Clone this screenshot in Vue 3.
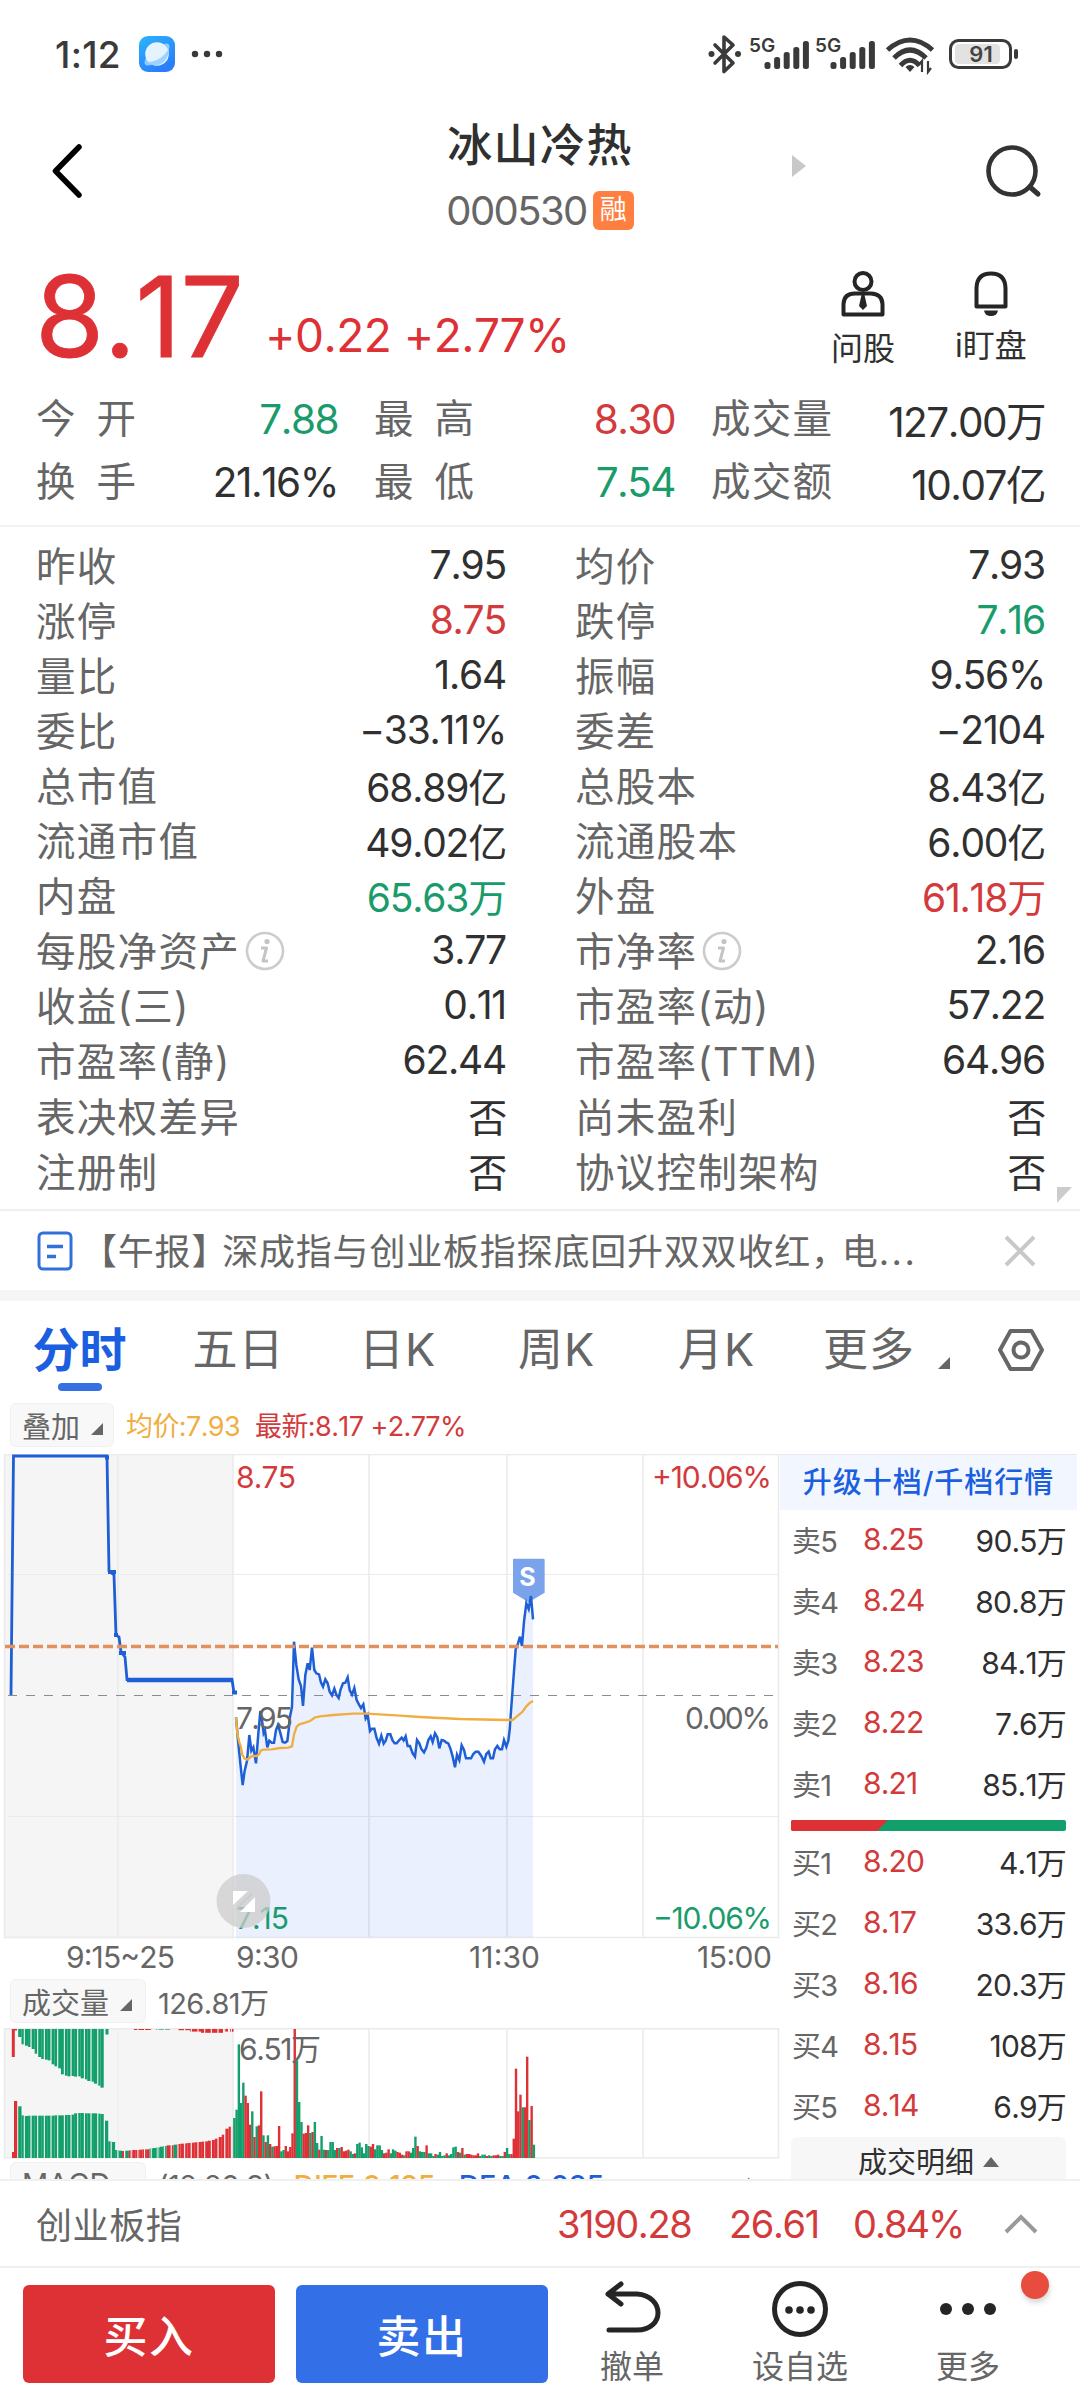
<template>
  <div class="page">
    <header class="status">
      <span class="clock">1:12</span>
      <svg class="globe" viewBox="0 0 36 36">
        <defs>
          <linearGradient id="globeBg" x1="0" y1="0" x2="0.6" y2="1">
            <stop offset="0" stop-color="#2cb5fb" />
            <stop offset="1" stop-color="#2a7dfb" />
          </linearGradient>
        </defs>
        <rect width="36" height="36" rx="9" fill="url(#globeBg)" />
        <ellipse cx="18" cy="18.500" rx="15.500" ry="6" fill="#8fcbff" transform="rotate(-40 18 18.500)" />
        <circle cx="18" cy="18" r="11.800" fill="#e3f4ff" />
        <path d="M8 26C18 26 26 20 30 12C31 24 20 33 11 28Z" fill="#9fd2ff" />
      </svg>
      <svg class="more-dots" viewBox="0 0 32 8">
        <circle v-for="x in [4, 16, 28]" :key="x" :cx="x" cy="4" r="3.2" fill="#3a3a3a" />
      </svg>
      <svg class="status-icons" viewBox="0 0 320 44">
        <g fill="none" stroke="#3a3a3a" stroke-width="3.600" stroke-linejoin="round" stroke-linecap="round">
          <path d="M10 13L28 31L19 39.500V5L28 13L10 31" />
        </g>
        <circle cx="6.500" cy="22" r="3" fill="#3a3a3a" />
        <circle cx="33" cy="22" r="3" fill="#3a3a3a" />
        <g v-for="x in [0, 66]" :key="x">
          <text :x="44 + x" y="19.500" class="net">5G</text>
          <rect
            v-for="(h, i) in [7, 12, 17, 22, 28]"
            :key="h"
            :x="59.500 + x + i * 9.6"
            :y="37 - h"
            width="6"
            :height="h"
            rx="2.500"
            fill="#3a3a3a"
          />
        </g>
        <g fill="none" stroke="#3a3a3a" stroke-width="5">
          <path d="M182.500 18Q205 -2 227.500 18" />
          <path d="M189 26Q205 10 221 26" />
          <path d="M195.500 33.500Q205 23 214.500 33.500" />
        </g>
        <path d="M200.500 35Q205 31 209.500 35L205 40Z" fill="#3a3a3a" />
        <path d="M217 40V29L213.500 33M223 29V40L226 36" fill="none" stroke="#3a3a3a" stroke-width="2.200" />
        <rect x="245.500" y="8.500" width="60" height="27" rx="8" fill="#fff" stroke="#3a3a3a" stroke-width="3" />
        <rect x="250" y="12" width="45" height="20" rx="4" fill="#e2e2e2" />
        <rect x="309" y="17" width="4" height="10" rx="2" fill="#3a3a3a" />
        <text x="276" y="30" class="battery">91</text>
      </svg>
    </header>

    <nav class="title-bar">
      <svg class="back" viewBox="0 0 34 56">
        <path d="M29 4L5.500 28L29 52" fill="none" stroke="#000" stroke-width="5.500" stroke-linecap="round" stroke-linejoin="round" />
      </svg>
      <div class="title">
        <h1>冰山冷热</h1>
        <div class="code"><span>000530</span><i>融</i></div>
      </div>
      <svg class="next" viewBox="0 0 14 22"><path d="M0 0L14 11L0 22Z" fill="#c8c8c8" /></svg>
      <svg class="search" viewBox="0 0 60 56">
        <circle cx="28" cy="27" r="23.500" fill="none" stroke="#333" stroke-width="4.600" />
        <path d="M46 43L54 50" stroke="#333" stroke-width="5" stroke-linecap="round" />
      </svg>
    </nav>

    <section class="price-row">
      <span class="price">8.17</span>
      <span class="change">+0.22 +2.77%</span>
      <div class="action ask">
        <svg viewBox="0 0 44 46" fill="none" stroke="#252525" stroke-width="4">
          <circle cx="22" cy="10.500" r="8.500" />
          <path d="M2.500 43.500V33Q3 22.500 14 22.500H30Q41 23 41.500 33V43.500Z" stroke-linejoin="round" />
          <path d="M20.500 24H23.500L26 35L22 39L18 35Z" fill="#252525" stroke="none" />
        </svg>
        <span>问股</span>
      </div>
      <div class="action bell">
        <svg viewBox="0 0 44 46" fill="none" stroke="#252525" stroke-width="4">
          <path d="M7.500 35.500V17Q8 2.500 22 2.500Q36 2.500 36.500 17V35.500Z" stroke-linejoin="round" />
          <path d="M15 39.500H29Q28 45 22 45Q16 45 15 39.500Z" fill="#252525" stroke="none" />
        </svg>
        <span>i盯盘</span>
      </div>
    </section>

    <section class="summary">
      <div v-for="s in summary" :key="s.label" class="summary-cell">
        <span :class="['label', { spread: s.label.length === 2 }]">{{ s.label }}</span>
        <span :class="['num', s.tone]">{{ s.value }}</span>
      </div>
    </section>

    <section class="detail">
      <div v-for="d in details" :key="d[0]" class="detail-cell">
        <span class="label">{{ d[0] }}</span>
        <svg v-if="d[3]" class="info" viewBox="0 0 40 40">
          <circle cx="20" cy="20" r="18" fill="none" stroke="#ccc" stroke-width="2.600" />
          <circle cx="22" cy="10.500" r="2.600" fill="#c4c4c4" />
          <path d="M16 17H21.500L18 30H23M18 17" fill="none" stroke="#c4c4c4" stroke-width="3" stroke-linejoin="round" />
        </svg>
        <span :class="['num', d[2]]">{{ d[1] }}</span>
      </div>
      <svg class="corner" viewBox="0 0 16 16"><path d="M0 0H15L0 16Z" fill="#ccc" /></svg>
    </section>

    <section class="news">
      <svg class="doc" viewBox="0 0 36 40" fill="none" stroke="#3470dc" stroke-width="3">
        <rect x="2" y="2" width="32" height="36" rx="4" />
        <path d="M10 15.500H26M10 25.500H19" stroke-width="3.500" />
      </svg>
      <span class="headline">【午报<span class="bracket">】</span>深成指与创业板指探底回升双双收红<span class="comma">，</span>电<span class="dots">...</span></span>
      <svg class="close" viewBox="0 0 32 32">
        <path d="M2 2L30 30M30 2L2 30" stroke="#c8c8c8" stroke-width="4" />
      </svg>
    </section>

    <nav class="tabs">
      <span v-for="(t, i) in tabs" :key="t" :class="{ active: i === 0 }">{{ t }}</span>
      <svg class="tab-arrow" viewBox="0 0 12 12"><path d="M12 0V12H0Z" fill="#666" /></svg>
      <svg class="settings" viewBox="0 0 48 44" fill="none" stroke="#666" stroke-width="4">
        <path d="M13.500 3H34.500L45 22L34.500 41H13.500L3 22Z" stroke-linejoin="round" />
        <circle cx="24" cy="22" r="7.500" />
      </svg>
    </nav>

    <div class="legend">
      <span class="pill">叠加<svg viewBox="0 0 12 12"><path d="M12 0V12H0Z" fill="#666" /></svg></span>
      <span class="avg">均价:7.93</span>
      <span class="latest">最新:8.17 +2.77%</span>
    </div>

    <main class="market">
      <div class="charts">
        <svg class="chart" viewBox="0 0 780 524">
          <rect x="5" y="1" width="228" height="482" fill="#f5f5f5" />
          <g fill="none" stroke="#ebebeb" stroke-width="1.600">
            <rect x="4.500" y=".500" width="774" height="483" />
            <path v-for="x in [118, 233, 369, 507, 643]" :key="x" :d="`M${x} 0V483`" />
            <path d="M8 120.500H778M8 362.500H778" stroke-width="1" />
          </g>
          <g transform="translate(220 86) scale(.33333)">
            <polygon :points="`48,1192 ${priceLine} 939,1192`" fill="#2f6de8" fill-opacity=".1" />
          </g>
          <path d="M8 241.500H778" stroke="#8c8c8c" stroke-width="1.200" stroke-dasharray="9 9" />
          <path d="M11 241L13.500 2H107L109 117L114 121L116 181L119 183L121 198L125 203L127 225.500H232L234 239" class="line" />
          <path d="M127 226H233" stroke="#1f5fd6" stroke-width="4.600" />
          <path d="M105 3.500H109M108 118H116M114 181H118M119 199H126M232 238.500H237" stroke="#1f5fd6" stroke-width="4" />
          <g transform="translate(220 86) scale(.33333)">
            <path d="M879 58Q879 56 883 56H970Q974 56 974 60V158L926 187L879 158Z" fill="#7ba3ec" />
            <text x="922" y="139" class="marker">S</text>
            <polyline :points="priceLine" fill="none" stroke="#1f5fd6" stroke-width="7.500" />
            <polyline :points="avgLine" fill="none" stroke="#efae3f" stroke-width="7" stroke-linejoin="round" />
          </g>
          <text x="236" y="274.500" class="axis" textLength="57">7.95</text>
          <path d="M5 192.500H778" stroke="#e2915c" stroke-width="3.400" stroke-dasharray="10 4" />
          <text x="236" y="33.500" class="axis up" textLength="60">8.75</text>
          <text x="236" y="475" class="axis down" textLength="53">7.15</text>
          <circle cx="243.500" cy="447" r="27" fill="#ccc" fill-opacity=".75" />
          <path d="M233 437H248L233 451ZM255 443V458H240Z" fill="#fff" />
          <path d="M236 455L252 440" stroke="#ccc" stroke-width="2" />
          <text x="652" y="33.500" class="axis up" textLength="120">+10.06%</text>
          <text x="685" y="274.500" class="axis" textLength="86">0.00%</text>
          <text x="653" y="475" class="axis down" textLength="119">−10.06%</text>
          <text x="66" y="514" class="axis" textLength="109">9:15~25</text>
          <text x="236" y="514" class="axis" textLength="63">9:30</text>
          <text x="469" y="514" class="axis" textLength="71">11:30</text>
          <text x="697" y="514" class="axis" textLength="75">15:00</text>
        </svg>
        <div class="legend volume-legend">
          <span class="pill wide">成交量<svg viewBox="0 0 12 12"><path d="M12 0V12H0Z" fill="#666" /></svg></span>
          <span>126.81万</span>
        </div>
        <svg class="volume" viewBox="0 0 780 131">
          <rect x="5" y="1" width="228" height="129" fill="#f5f5f5" />
          <g fill="none" stroke="#ebebeb" stroke-width="1.600">
            <rect x="4.500" y=".800" width="774" height="129" />
            <path v-for="x in [118, 233, 369, 507, 643]" :key="x" :d="`M${x} 0V130`" />
          </g>
          <rect v-for="(b, i) in auctionBars" :key="'a' + i" :x="b.x" :y="b.y" :width="b.w" :height="b.h" :fill="b.fill" />
          <path v-for="x in auctionGaps" :key="x" :d="`M${x} 1V130`" stroke="#f5f5f5" stroke-width="1.100" />
          <rect v-for="(b, i) in volumeBars" :key="i" :x="b.x" :y="130 - b.h" width="2.400" :height="b.h" :fill="b.fill" />
          <text x="239" y="32" class="axis" textLength="82">6.51万</text>
        </svg>
        <div class="legend macd">
          <span class="pill wide">MACD</span>
          <span>(12,26,9)</span>
          <span class="diff">DIFF:0.125</span>
          <span class="dea">DEA:0.085</span>
          <span class="macd-tail">▲</span>
        </div>
      </div>

      <aside class="book">
        <div class="upgrade">升级十档/千档行情</div>
        <div v-for="q in asks" :key="q[0]" class="quote">
          <span>{{ q[0] }}</span><b>{{ q[1] }}</b><em>{{ q[2] }}</em>
        </div>
        <svg class="ratio" viewBox="0 0 275 11">
          <rect width="275" height="11" rx="2" fill="#139f6b" />
          <path d="M2 0H97L86 11H2Q0 11 0 9V2Q0 0 2 0Z" fill="#de3136" />
        </svg>
        <div v-for="q in bids" :key="q[0]" class="quote">
          <span>{{ q[0] }}</span><b>{{ q[1] }}</b><em>{{ q[2] }}</em>
        </div>
        <div class="trades">成交明细<svg viewBox="0 0 16 10"><path d="M8 0L16 10H0Z" fill="#666" /></svg></div>
      </aside>
    </main>

    <section class="index-bar">
      <span class="index-name">创业板指</span>
      <span class="i1">3190.28</span>
      <span class="i2">26.61</span>
      <span class="i3">0.84%</span>
      <svg viewBox="0 0 34 20"><path d="M2 18L17 3L32 18" fill="none" stroke="#999" stroke-width="4" /></svg>
    </section>

    <footer class="actions">
      <button class="buy">买入</button>
      <button class="sell">卖出</button>
      <div class="tool cancel">
        <svg viewBox="0 0 60 60" fill="none" stroke="#252525" stroke-width="5" stroke-linecap="round" stroke-linejoin="round">
          <path d="M6 15H35C63 17 63 51 35 51H7M19 5L6 15L19 25" />
        </svg>
        <span>撤单</span>
      </div>
      <div class="tool choose">
        <svg viewBox="0 0 60 60">
          <circle cx="30" cy="30" r="25.500" fill="none" stroke="#252525" stroke-width="5" />
          <circle v-for="x in [19, 30, 41]" :key="x" :cx="x" cy="31" r="3.800" fill="#252525" />
        </svg>
        <span>设自选</span>
      </div>
      <div class="tool extra">
        <svg viewBox="0 0 60 60">
          <circle v-for="x in [8, 30, 52]" :key="x" :cx="x" cy="30" r="6" fill="#252525" />
        </svg>
        <span>更多</span>
        <i class="badge"></i>
      </div>
    </footer>
  </div>
</template>

<script setup>
const RED = '#de3136';
const GREEN = '#139f6b';

const summary = [
  { label: '今开', value: '7.88', tone: 'down' },
  { label: '最高', value: '8.30', tone: 'up' },
  { label: '成交量', value: '127.00万' },
  { label: '换手', value: '21.16%' },
  { label: '最低', value: '7.54', tone: 'down' },
  { label: '成交额', value: '10.07亿' }
];

// label, value, tone, info icon
const details = [
  ['昨收', '7.95'], ['均价', '7.93'],
  ['涨停', '8.75', 'up'], ['跌停', '7.16', 'down'],
  ['量比', '1.64'], ['振幅', '9.56%'],
  ['委比', '−33.11%'], ['委差', '−2104'],
  ['总市值', '68.89亿'], ['总股本', '8.43亿'],
  ['流通市值', '49.02亿'], ['流通股本', '6.00亿'],
  ['内盘', '65.63万', 'down'], ['外盘', '61.18万', 'up'],
  ['每股净资产', '3.77', '', true], ['市净率', '2.16', '', true],
  ['收益(三)', '0.11'], ['市盈率(动)', '57.22'],
  ['市盈率(静)', '62.44'], ['市盈率(TTM)', '64.96'],
  ['表决权差异', '否'], ['尚未盈利', '否'],
  ['注册制', '否'], ['协议控制架构', '否']
];

const tabs = ['分时', '五日', '日K', '周K', '月K', '更多'];

const asks = [
  ['卖5', '8.25', '90.5万'],
  ['卖4', '8.24', '80.8万'],
  ['卖3', '8.23', '84.1万'],
  ['卖2', '8.22', '7.6万'],
  ['卖1', '8.21', '85.1万']
];
const bids = [
  ['买1', '8.20', '4.1万'],
  ['买2', '8.17', '33.6万'],
  ['买3', '8.16', '20.3万'],
  ['买4', '8.15', '108万'],
  ['买5', '8.14', '6.9万']
];

const priceLine =
  '48,532 54,600 61,670 68,735 74,692 81,663 88,585 94,632 100,622 108,670 115,580 121,513 128,555 131,580 135,572 142,622 148,602 155,608 162,608 168,570 174,555 180,575 188,606 195,608 202,603 206,570 210,530 216,500 222,305 229,375 236,418 243,438 249,498 256,405 263,370 269,390 276,323 283,390 289,400 297,403 303,428 309,440 316,418 323,430 329,455 336,466 343,446 349,464 356,474 362,448 369,430 376,428 383,412 389,450 396,464 403,444 410,480 417,494 423,504 430,493 437,535 443,525 450,573 456,566 463,566 470,594 477,611 484,587 491,611 497,602 503,583 511,583 518,602 524,610 530,610 538,600 545,593 551,601 557,589 563,618 570,618 578,640 585,650 591,600 598,610 604,627 612,637 619,623 625,600 632,589 638,606 645,580 652,592 658,625 665,600 672,602 678,607 685,610 692,628 698,650 705,682 711,644 718,660 725,616 732,630 738,655 753,655 760,642 767,635 775,635 784,648 792,665 799,642 806,635 812,655 819,655 825,628 832,618 839,628 846,628 852,600 859,620 865,602 869,570 874,500 880,420 887,328 894,310 900,290 906,318 912,245 919,190 926,207 933,168 939,238';

const avgLine =
  '48,532 52,580 58,608 62,618 67,645 74,656 82,659 88,654 96,648 110,648 118,642 122,632 130,629 155,628 180,624 205,623 216,619 222,584 230,560 238,553 256,548 270,543 286,532 300,529 340,525 400,521 440,521 540,527 600,531 720,537 860,540 878,540 890,530 908,515 918,500 930,488 939,483';

// minute volumes in chart units, negative values are down ticks
const minutes = [
  -120, -145, -341, -165, -226, 187, 165, 100, -140, 63, -95, 98, 200, -68, 48, -68, 42, -34, 35, 36,
  96, -20, -24, 36, 20, 33, 74, 387, -293, -168, -108, 73, 75, 98, -75, 78, -108, -45, 25, -66,
  -25, 24, -24, -48, -48, -24, 30, -30, 33, 20, 22, 25, -20, -12, 14, -42, -46, -32, -14, -42,
  -36, 34, 42, -26, -38, -38, -24, 14, 16, 26, -14, -26, -22, 18, 16, 10, -8, 20, 20, -16,
  -30, -64, 36, -20, -18, -18, 38, -14, -14, -6, 12, -10, -18, -6, -8, 14, -8, -12, -32, -34,
  18, -16, 30, -10, 12, 12, 10, 8, 8, 14, -6, -10, -10, 6, -8, -6, 8, 8, 10, -6,
  -6, 18, -30, -12, 12, 58, 268, 140, 190, -152, 152, 304, -114, 156, -40
];
const volumeBars = minutes.map((v, i) => ({
  x: 233.2 + i * 2.235,
  h: Math.abs(v) / 3,
  fill: v > 0 ? RED : GREEN
}));

const hanging = [24, 46, 50, 54, 60, 74, 84, 90, 92, 94, 106, 112, 118, 136, 140, 142, 141, 143, 142, 148, 151, 156, 158, 164, 170, 176];
const standing = [155, 128, 126, 127, 127, 127, 127, 127, 127, 127, 127, 128, 128, 128, 129, 129, 130, 134, 135, 135, 134, 134, 134, 134, 133, 132];
const tail = [
  -112, -50, -48, -24, -22, 21, -22, 23, 24, 24, 25, 26, 26, -29, -30, -32, -34, -36, 38, 38,
  -40, 42, 43, 44, 45, 46, 47, 48, 49, 50, 52, 54, 58, 63, 70, 88, 94
];

const auctionBars = [
  { x: 11.8, y: 1, w: 3, h: 28, fill: RED },
  { x: 14, y: 1, w: 3, h: 1.5, fill: RED },
  { x: 12, y: 124, w: 3, h: 6, fill: RED },
  { x: 14, y: 73, w: 3.2, h: 57, fill: RED },
  { x: 105.5, y: 1, w: 3, h: 5.5, fill: GREEN },
  ...hanging.map((h, i) => ({ x: 18.2 + i * 3.29, y: 1, w: 3.35, h: h / 3, fill: GREEN })),
  ...standing.map((h, i) => ({ x: 18.2 + i * 3.29, y: 130 - h / 3, w: 3.35, h: h / 3, fill: GREEN })),
  ...tail.map((v, i) => ({
    x: 104.8 + i * 3.44,
    y: 130 - Math.abs(v) / 3,
    w: 3.45,
    h: Math.abs(v) / 3,
    fill: v > 0 ? RED : GREEN
  })),
  { x: 134, y: 1, w: 18, h: 1, fill: RED },
  { x: 156, y: 1, w: 14, h: 0.6, fill: GREEN },
  { x: 178, y: 1, w: 12, h: 1.2, fill: RED },
  { x: 190, y: 1, w: 11, h: 2.6, fill: RED },
  { x: 201, y: 1, w: 22, h: 3.8, fill: RED },
  { x: 224, y: 1, w: 4, h: 2.6, fill: RED },
  { x: 230, y: 1, w: 3.5, h: 2.8, fill: RED }
];
const auctionGaps = Array.from({ length: 32 }, (_, i) => 24.3 + i * 6.68);
</script>

<style>
body {
  margin: 0;
  background: #fff;
}
</style>

<style scoped>
.page {
  width: 1080px;
  height: 2400px;
  overflow: hidden;
  display: flex;
  flex-direction: column;
  background: #fff;
  color: #303030;
  font-family: Inter, "Noto Sans CJK SC", sans-serif;
  font-kerning: none;
  white-space: nowrap;
}

.page * {
  box-sizing: border-box;
}

svg {
  display: block;
  flex: none;
}

.up {
  color: #d23a3c;
  fill: #d23a3c;
}

.down {
  color: #1a9b6c;
  fill: #1a9b6c;
}

/* status bar */
.status {
  flex: none;
  height: 108px;
  display: flex;
  align-items: center;
  padding-left: 55px;
}

.clock {
  width: 84px;
  font-size: 37px;
  font-weight: 500;
  letter-spacing: 0.3px;
  color: #3a3a3a;
}

.globe {
  width: 36px;
  height: 36px;
}

.more-dots {
  width: 32px;
  height: 8px;
  margin-left: 16px;
}

.status-icons {
  width: 320px;
  height: 44px;
  margin-left: 482px;
}

.net {
  font-size: 19px;
  font-weight: 600;
  fill: #3a3a3a;
}

.battery {
  font-size: 22px;
  font-weight: 600;
  text-anchor: middle;
  fill: #444;
}

/* title */
.title-bar {
  flex: none;
  height: 142px;
  display: flex;
  align-items: flex-start;
  padding-left: 50px;
}

.back {
  width: 34px;
  height: 56px;
  margin-top: 35px;
}

.title {
  width: 220px;
  margin-left: 346px;
  display: flex;
  flex-direction: column;
  align-items: center;
}

.title h1 {
  margin: 8px 0 0;
  font-size: 45px;
  font-weight: 500;
  line-height: 60px;
  letter-spacing: 1.4px;
}

.code {
  display: flex;
  align-items: center;
  gap: 6px;
  height: 40px;
  margin-top: 14px;
  color: #666;
}

.code span {
  font-size: 40px;
  letter-spacing: -1.6px;
}

.code i {
  width: 41px;
  height: 39px;
  border-radius: 6px;
  background: #ff7f40;
  color: #fff;
  font-size: 27px;
  font-style: normal;
  line-height: 38px;
  text-align: center;
}

.next {
  width: 14px;
  height: 22px;
  margin: 47px 0 0 142px;
}

.search {
  width: 60px;
  height: 56px;
  margin: 36px 0 0 178px;
}

/* price */
.price-row {
  flex: none;
  height: 136px;
  display: flex;
  align-items: flex-start;
  padding-left: 35px;
  color: #de3136;
}

.price {
  width: 230px;
  font-size: 112px;
  font-weight: 400;
  line-height: 132px;
  letter-spacing: -0.5px;
  -webkit-text-stroke: 0.8px #de3136;
}

.change {
  width: 563px;
  margin-top: 55px;
  font-size: 46px;
  line-height: 60px;
  letter-spacing: -0.5px;
}

.action {
  width: 70px;
  padding-top: 21px;
  display: flex;
  flex-direction: column;
  align-items: center;
  color: #303030;
}

.action svg {
  width: 44px;
  height: 46px;
}

.action span {
  margin-top: 12px;
  font-size: 32px;
  line-height: 40px;
}

.bell {
  width: 80px;
  margin-left: 53px;
}

.bell span {
  margin-top: 9px;
}

/* summary */
.summary {
  flex: none;
  height: 141px;
  padding: 1px 35px 0 36px;
  display: grid;
  grid-template-columns: 302px 301px 334px;
  grid-template-rows: 63px 63px;
  column-gap: 36px;
  border-bottom: 2px solid #f3f3f3;
}

.summary-cell,
.detail-cell {
  display: flex;
  align-items: center;
}

.label {
  padding-bottom: 4px;
  color: #666;
  font-size: 39.500px;
  letter-spacing: 1.300px;
}

.spread {
  letter-spacing: 21px;
}

.summary .label {
  padding-bottom: 6px;
}

.num {
  margin-left: auto;
  font-size: 40.500px;
  letter-spacing: -1.500px;
}

.summary .num {
  padding-top: 2px;
}

/* details */
.detail {
  flex: none;
  position: relative;
  height: 684px;
  padding: 11px 33px 0 36px;
  display: grid;
  grid-template-columns: 470px 470px;
  grid-auto-rows: 55.060px;
  column-gap: 69px;
  border-bottom: 2px solid #f0f0f0;
}

.detail .num {
  padding-bottom: 2px;
  font-size: 39px;
  letter-spacing: -1.200px;
}

.info {
  width: 40px;
  height: 40px;
  margin-left: 5px;
}

.corner {
  position: absolute;
  right: 7px;
  bottom: 6px;
  width: 16px;
  height: 16px;
}

/* news */
.news {
  flex: none;
  height: 90px;
  display: flex;
  align-items: center;
  padding-left: 37px;
  border-bottom: 11px solid #f5f5f5;
}

.doc {
  width: 36px;
  height: 40px;
}

.headline {
  width: 913px;
  margin-left: 8px;
  padding-bottom: 3px;
  color: #666;
  font-size: 36px;
  letter-spacing: 0.800px;
}

/* half-width punctuation keeps the title compact */
.bracket,
.comma {
  margin-right: 12px;
  font-feature-settings: "halt";
}

.dots {
  letter-spacing: 2.500px;
}

.close {
  width: 32px;
  height: 32px;
  margin-left: 10px;
}

/* tabs */
.tabs {
  flex: none;
  height: 97px;
  display: flex;
  align-items: center;
  color: #666;
  font-size: 45px;
  letter-spacing: 1px;
}

.tabs span {
  position: relative;
  width: 159px;
  height: 97px;
  line-height: 98px;
  text-align: center;
}

.tabs span:nth-child(5) {
  width: 161px;
}

.tabs span:nth-child(6) {
  width: 144px;
}

.tabs .active {
  font-weight: 700;
  font-size: 47px;
  letter-spacing: 0;
  color: #1b5fe0;
}

.tabs .active::after {
  content: "";
  position: absolute;
  left: 58px;
  bottom: 7px;
  width: 44px;
  height: 8px;
  border-radius: 4px;
  background: #3470e4;
}

.tab-arrow {
  width: 12px;
  height: 12px;
  margin: 27px 0 0 -3px;
}

.settings {
  width: 48px;
  height: 44px;
  margin-left: 47px;
}

/* legends */
.legend {
  flex: none;
  height: 56px;
  display: flex;
  align-items: center;
  padding: 0 0 3px 10px;
  font-size: 27px;
  letter-spacing: -0.600px;
  color: #666;
}

.pill {
  width: 104px;
  height: 44px;
  display: flex;
  align-items: center;
  padding-left: 11px;
  border: 1px solid #f0f0f0;
  border-radius: 6px;
  background: #f8f8f8;
  font-size: 29px;
  letter-spacing: 0;
}

.pill svg {
  width: 12px;
  height: 12px;
  margin: 9px 0 0 11px;
}

.pill.wide {
  width: 136px;
}

.avg {
  margin-left: 12px;
  color: #efae3f;
}

.latest {
  margin-left: 15px;
  color: #d23a3c;
}

/* charts */
.market {
  flex: none;
  height: 727px;
  display: flex;
  overflow: hidden;
  border-bottom: 2px solid #f0f0f0;
}

.charts {
  width: 780px;
  flex: none;
}

.chart {
  width: 780px;
  height: 524px;
}

.volume {
  width: 780px;
  height: 131px;
}

.volume-legend {
  height: 50px;
  padding-bottom: 5px;
  font-size: 29px;
}

.volume-legend > span + span {
  margin-left: 12px;
}

.axis {
  font-size: 30px;
  fill: #666;
}

.axis.up {
  fill: #d23a3c;
}

.axis.down {
  fill: #1a9b6c;
}

.marker {
  font-size: 75px;
  font-weight: 700;
  text-anchor: middle;
  fill: #fff;
}

.line {
  fill: none;
  stroke: #1f5fd6;
  stroke-width: 2.800;
}

.macd {
  padding-top: 3px;
  align-items: flex-start;
  font-size: 29px;
  line-height: 48px;
}

.macd > span + span {
  margin-left: 12px;
}

.macd .diff {
  margin-left: 20px;
  font-weight: 500;
  color: #efae3f;
}

.macd .dea {
  margin-left: 24px;
  font-weight: 500;
  color: #1f5fd6;
}

.macd .macd-tail {
  margin-left: 135px;
  font-size: 20px;
}

/* order book */
.book {
  width: 297px;
  flex: none;
}

.upgrade {
  height: 56px;
  background: #f2f6fe;
  border-top: 1px solid #e6e9ee;
  color: #1b5fe0;
  font-size: 29px;
  font-weight: 500;
  letter-spacing: 1px;
  line-height: 56px;
  text-align: center;
}

.quote {
  height: 61px;
  display: flex;
  align-items: center;
  padding: 0 11px 3px 12px;
  font-size: 30px;
  letter-spacing: -0.800px;
}

.quote span {
  width: 71px;
  font-size: 29px;
  color: #666;
}

.quote b {
  font-weight: 400;
  color: #d23a3c;
}

.quote em {
  margin-left: auto;
  font-style: normal;
}

.ratio {
  width: 275px;
  height: 11px;
  margin: 5px 0 1px 11px;
}

.trades {
  width: 275px;
  height: 60px;
  margin-left: 11px;
  display: flex;
  justify-content: center;
  gap: 9px;
  border-radius: 6px;
  background: #f7f7f7;
  font-size: 29px;
  line-height: 51px;
}

.trades svg {
  width: 16px;
  height: 10px;
  margin-top: 20px;
}

/* index */
.index-bar {
  flex: none;
  height: 87px;
  display: flex;
  align-items: center;
  padding-left: 36px;
  color: #d23a3c;
  font-size: 38px;
  letter-spacing: -1.400px;
  border-bottom: 2px solid #f0f0f0;
}

.index-name {
  width: 521px;
  padding-bottom: 2px;
  color: #666;
  font-size: 36px;
  letter-spacing: 0.600px;
}

.i1 {
  width: 172px;
}

.i2 {
  width: 124px;
}

.i3 {
  width: 151px;
  letter-spacing: -2px;
}

.index-bar svg {
  width: 34px;
  height: 20px;
}

/* bottom actions */
.actions {
  flex: none;
  height: 131px;
  display: flex;
  align-items: flex-start;
  padding: 17px 0 0 23px;
}

button {
  width: 252px;
  height: 98px;
  margin: 0 21px 0 0;
  padding: 0;
  border: 0;
  border-radius: 6px;
  color: #fff;
  font-family: inherit;
  font-size: 44px;
  font-weight: 500;
  letter-spacing: 1.500px;
}

.buy {
  background: #de3136;
}

.sell {
  background: #336fe6;
}

.tool {
  position: relative;
  width: 110px;
  display: flex;
  flex-direction: column;
  align-items: center;
  color: #666;
  font-size: 32px;
}

.tool svg {
  width: 60px;
  height: 60px;
  margin-top: -6px;
}

.tool span {
  margin-top: 8px;
  line-height: 40px;
}

.cancel {
  margin-left: 8px;
}

.choose {
  margin-left: 58px;
}

.extra {
  margin-left: 58px;
}

.badge {
  position: absolute;
  top: -14px;
  left: 108px;
  width: 28px;
  height: 28px;
  border-radius: 50%;
  background: #e84c3e;
  box-shadow: 1px 4px 5px rgba(0, 0, 0, 0.15);
}
</style>
